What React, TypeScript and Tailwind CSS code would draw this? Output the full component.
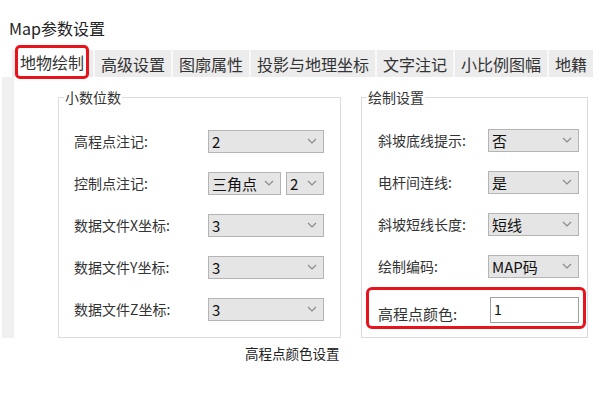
function Chevron() {
  return (
    <svg width="10" height="6" viewBox="0 0 10 6" className="shrink-0">
      <polyline points="1,1 5,5 9,1" fill="none" stroke="#8a8a8a" strokeWidth="1.2" />
    </svg>
  );
}

interface SelectProps {
  value: string;
  className: string;
}

function Select({ value, className }: SelectProps) {
  return (
    <div className={`h-[23px] bg-[#e5e5e5] border border-[#b4b4b4] flex items-center justify-between pl-[3px] pr-[6px] text-[15px] text-[#111] ${className}`}>
      <span className="leading-none">{value}</span>
      <Chevron />
    </div>
  );
}

function Row({ label, labelW, children }: { label: string; labelW: string; children: React.ReactNode }) {
  return (
    <div className="h-[42px] flex items-center">
      <div className={`${labelW} text-[14px] text-[#333]`}>{label}</div>
      {children}
    </div>
  );
}

function GroupBox({ title, className, children }: { title: string; className: string; children: React.ReactNode }) {
  return (
    <div className={`relative border border-[#dcdcdc] ${className}`}>
      <span className="absolute -top-[10px] left-[5px] bg-white px-[1px] text-[14px] leading-[18px] text-[#333]">{title}</span>
      {children}
    </div>
  );
}

const tabs = ["高级设置", "图廓属性", "投影与地理坐标", "文字注记", "小比例图幅", "地籍"];

export default function App() {
  return (
    <div className="w-[600px] h-[400px] bg-white overflow-hidden font-['Noto_Sans_CJK_SC','Liberation_Sans',sans-serif] text-[#222]">
      <div className="h-[43px] pt-[18px] pl-[9px] text-[16px] leading-[20px] text-[#222]">Map参数设置</div>

      <div className="h-[34px] flex items-end pl-[12px]">
        <div className="h-[27px] w-[3px] bg-[#ececec]" />
        <div className="relative z-10 -mb-[2px] h-[34px] w-[74px] shrink-0 bg-white border-[3px] border-[#e8141c] rounded-[5px] flex items-center justify-center text-[16px] text-[#333] whitespace-nowrap">
          地物绘制
        </div>
        <div className="h-[27px] w-[4px] bg-[#ececec]" />
        {tabs.map((t) => (
          <div key={t} className="h-[27px] bg-[#ececec] border-l-2 border-[#f9f9f9] px-[6px] flex items-center text-[16px] text-[#333] whitespace-nowrap">
            {t}
          </div>
        ))}
      </div>

      <div className="h-[261px] flex ml-[2px]">
        <div className="w-[12px] bg-[#f0f0f0]" />
        <div className="flex-1 bg-white flex pt-[20px] pb-[1px] pl-[44px] gap-[20px]">
          <GroupBox title="小数位数" className="w-[283px] h-[241px] pt-[22px]">
            <div className="pl-[15px]">
              <Row label="高程点注记:" labelW="w-[134px]">
                <Select value="2" className="w-[116px]" />
              </Row>
              <Row label="控制点注记:" labelW="w-[134px]">
                <Select value="三角点" className="w-[73px]" />
                <Select value="2" className="w-[38px] ml-[5px]" />
              </Row>
              <Row label="数据文件X坐标:" labelW="w-[134px]">
                <Select value="3" className="w-[116px]" />
              </Row>
              <Row label="数据文件Y坐标:" labelW="w-[134px]">
                <Select value="3" className="w-[116px]" />
              </Row>
              <Row label="数据文件Z坐标:" labelW="w-[134px]">
                <Select value="3" className="w-[116px]" />
              </Row>
            </div>
          </GroupBox>

          <GroupBox title="绘制设置" className="w-[227px] h-[241px] pt-[21px]">
            <div className="pl-[16px]">
              <Row label="斜坡底线提示:" labelW="w-[110px]">
                <Select value="否" className="w-[91px]" />
              </Row>
              <Row label="电杆间连线:" labelW="w-[110px]">
                <Select value="是" className="w-[91px]" />
              </Row>
              <Row label="斜坡短线长度:" labelW="w-[110px]">
                <Select value="短线" className="w-[91px]" />
              </Row>
              <Row label="绘制编码:" labelW="w-[110px]">
                <Select value="MAP码" className="w-[91px]" />
              </Row>
            </div>
            <div className="ml-[4px] mr-[1px] h-[42px] border-[3px] border-[#e8141c] rounded-[6px] flex items-start pl-[9px] pt-[7px]">
              <div className="w-[112px] pt-[8px] text-[15px] leading-[18px] text-[#333]">高程点颜色:</div>
              <div className="w-[89px] h-[26px] bg-white border border-[#a0a0a0] pl-[3px] text-[14px] leading-[22px] text-[#111]">1</div>
            </div>
          </GroupBox>
        </div>
      </div>

      <div className="pl-[245px] pt-[6px] text-[13.5px] leading-[18px] text-[#222]">高程点颜色设置</div>
    </div>
  );
}
